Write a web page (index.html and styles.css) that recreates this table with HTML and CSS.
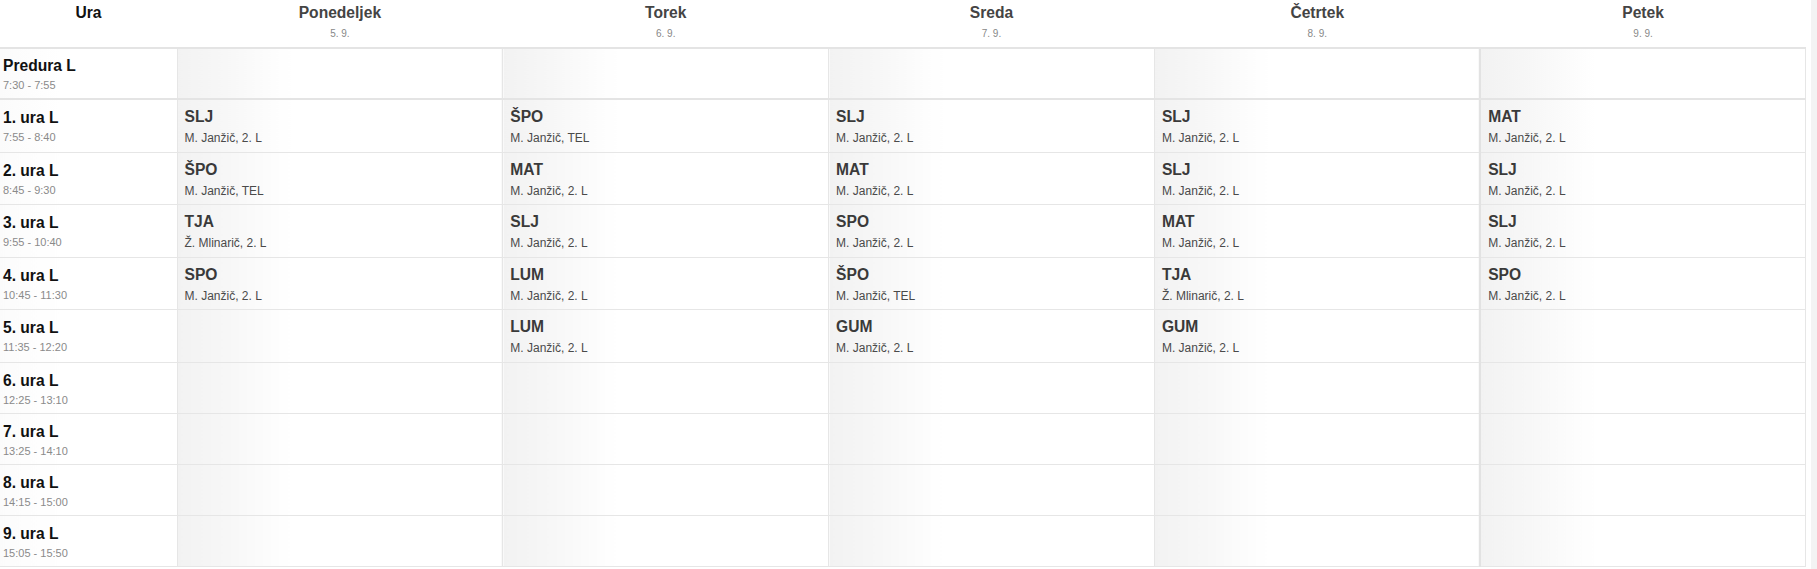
FILE: index.html
```html
<!DOCTYPE html>
<html lang="sl">
<head>
<meta charset="utf-8">
<title>Urnik</title>
<link rel="stylesheet" href="styles.css">
</head>
<body>
<div class="page">
  <table class="timetable">
    <colgroup>
      <col class="col-hour">
      <col class="col-day"><col class="col-day"><col class="col-day"><col class="col-day"><col class="col-day">
    </colgroup>
    <thead>
      <tr>
        <th class="head-hour"><div class="day-name">Ura</div></th>
        <th><div class="day-name">Ponedeljek</div><div class="day-date">5. 9.</div></th>
        <th><div class="day-name">Torek</div><div class="day-date">6. 9.</div></th>
        <th><div class="day-name">Sreda</div><div class="day-date">7. 9.</div></th>
        <th><div class="day-name">Četrtek</div><div class="day-date">8. 9.</div></th>
        <th><div class="day-name">Petek</div><div class="day-date">9. 9.</div></th>
      </tr>
    </thead>
    <tbody>
      <tr class="row-pre">
        <td class="hour"><div class="hour-name">Predura L</div><div class="hour-time">7:30 - 7:55</div></td>
        <td class="slot"></td><td class="slot"></td><td class="slot"></td><td class="slot"></td><td class="slot last"></td>
      </tr>
      <tr class="row-full">
        <td class="hour"><div class="hour-name">1. ura L</div><div class="hour-time">7:55 - 8:40</div></td>
        <td class="slot"><div class="subj">SLJ</div><div class="teach">M. Janžič, 2. L</div></td>
        <td class="slot"><div class="subj">ŠPO</div><div class="teach">M. Janžič, TEL</div></td>
        <td class="slot"><div class="subj">SLJ</div><div class="teach">M. Janžič, 2. L</div></td>
        <td class="slot"><div class="subj">SLJ</div><div class="teach">M. Janžič, 2. L</div></td>
        <td class="slot last"><div class="subj">MAT</div><div class="teach">M. Janžič, 2. L</div></td>
      </tr>
      <tr class="row-full">
        <td class="hour"><div class="hour-name">2. ura L</div><div class="hour-time">8:45 - 9:30</div></td>
        <td class="slot"><div class="subj">ŠPO</div><div class="teach">M. Janžič, TEL</div></td>
        <td class="slot"><div class="subj">MAT</div><div class="teach">M. Janžič, 2. L</div></td>
        <td class="slot"><div class="subj">MAT</div><div class="teach">M. Janžič, 2. L</div></td>
        <td class="slot"><div class="subj">SLJ</div><div class="teach">M. Janžič, 2. L</div></td>
        <td class="slot last"><div class="subj">SLJ</div><div class="teach">M. Janžič, 2. L</div></td>
      </tr>
      <tr class="row-full">
        <td class="hour"><div class="hour-name">3. ura L</div><div class="hour-time">9:55 - 10:40</div></td>
        <td class="slot"><div class="subj">TJA</div><div class="teach">Ž. Mlinarič, 2. L</div></td>
        <td class="slot"><div class="subj">SLJ</div><div class="teach">M. Janžič, 2. L</div></td>
        <td class="slot"><div class="subj">SPO</div><div class="teach">M. Janžič, 2. L</div></td>
        <td class="slot"><div class="subj">MAT</div><div class="teach">M. Janžič, 2. L</div></td>
        <td class="slot last"><div class="subj">SLJ</div><div class="teach">M. Janžič, 2. L</div></td>
      </tr>
      <tr class="row-full">
        <td class="hour"><div class="hour-name">4. ura L</div><div class="hour-time">10:45 - 11:30</div></td>
        <td class="slot"><div class="subj">SPO</div><div class="teach">M. Janžič, 2. L</div></td>
        <td class="slot"><div class="subj">LUM</div><div class="teach">M. Janžič, 2. L</div></td>
        <td class="slot"><div class="subj">ŠPO</div><div class="teach">M. Janžič, TEL</div></td>
        <td class="slot"><div class="subj">TJA</div><div class="teach">Ž. Mlinarič, 2. L</div></td>
        <td class="slot last"><div class="subj">SPO</div><div class="teach">M. Janžič, 2. L</div></td>
      </tr>
      <tr class="row-full">
        <td class="hour"><div class="hour-name">5. ura L</div><div class="hour-time">11:35 - 12:20</div></td>
        <td class="slot"></td>
        <td class="slot"><div class="subj">LUM</div><div class="teach">M. Janžič, 2. L</div></td>
        <td class="slot"><div class="subj">GUM</div><div class="teach">M. Janžič, 2. L</div></td>
        <td class="slot"><div class="subj">GUM</div><div class="teach">M. Janžič, 2. L</div></td>
        <td class="slot last"></td>
      </tr>
      <tr class="row-empty">
        <td class="hour"><div class="hour-name">6. ura L</div><div class="hour-time">12:25 - 13:10</div></td>
        <td class="slot"></td><td class="slot"></td><td class="slot"></td><td class="slot"></td><td class="slot last"></td>
      </tr>
      <tr class="row-empty">
        <td class="hour"><div class="hour-name">7. ura L</div><div class="hour-time">13:25 - 14:10</div></td>
        <td class="slot"></td><td class="slot"></td><td class="slot"></td><td class="slot"></td><td class="slot last"></td>
      </tr>
      <tr class="row-empty">
        <td class="hour"><div class="hour-name">8. ura L</div><div class="hour-time">14:15 - 15:00</div></td>
        <td class="slot"></td><td class="slot"></td><td class="slot"></td><td class="slot"></td><td class="slot last"></td>
      </tr>
      <tr class="row-empty">
        <td class="hour"><div class="hour-name">9. ura L</div><div class="hour-time">15:05 - 15:50</div></td>
        <td class="slot"></td><td class="slot"></td><td class="slot"></td><td class="slot"></td><td class="slot last"></td>
      </tr>
    </tbody>
  </table>
  <div class="scroll-strip"></div>
</div>
</body>
</html>
```

FILE: styles.css
```css
html, body {
  margin: 0;
  padding: 0;
  background: #fff;
}

body {
  font-family: "Liberation Sans", Arial, sans-serif;
  color: #333;
}

.page {
  display: flex;
  align-items: flex-start;
  width: 1817px;
  height: 569px;
  overflow: hidden;
}

.scroll-strip {
  flex: 0 0 6px;
  margin-left: 5px;
  height: 569px;
  background: #f3f3f3;
}

.timetable {
  flex: 0 0 1806px;
  width: 1806px;
  border-collapse: collapse;
  table-layout: fixed;
}

.col-hour { width: 177px; }
.col-day { width: 325.8px; }

.timetable th {
  padding: 4px 0 0;
  height: 43px;
  vertical-align: top;
  text-align: center;
  font-weight: normal;
  border-bottom: 2px solid #e4e4e4;
}

.day-name {
  font-size: 15.6px;
  line-height: 18px;
  font-weight: bold;
  color: #444;
}

.head-hour .day-name {
  color: #111;
}

.day-date {
  margin-top: 5px;
  font-size: 10px;
  line-height: 14px;
  color: #888;
}

.timetable td {
  vertical-align: top;
  border-bottom: 1px solid #e6e6e6;
  border-right: 1px solid #e6e6e6;
}

.row-pre td {
  height: 41px;
  border-bottom: 2px solid #e4e4e4;
}

.row-full td { height: 42.5px; }
.row-empty td { height: 41px; }

.hour {
  padding: 9px 3px 0;
  background: linear-gradient(to right, #fbfbfb, #fff 60px);
}

.row-pre .hour { padding-top: 8px; }
.row-pre .slot { padding-top: 8px; }
.row-full .slot { padding-top: 10px; height: 41.5px; }
.row-empty .slot { padding-top: 9px; }

.hour-name {
  font-size: 15.6px;
  line-height: 18px;
  font-weight: bold;
  color: #111;
}

.hour-time {
  margin-top: 3px;
  font-size: 11px;
  line-height: 14px;
  color: #8a8a8a;
}

.slot {
  padding: 7px 7px 0;
  background: linear-gradient(to right, #f2f2f2, #f7f7f7 50px, #fff 115px);
}

.slot.last {
  border-left: 2px solid #e2e2e2;
}

.subj {
  margin-top: -2px;
  font-size: 15.6px;
  line-height: 18px;
  font-weight: bold;
  color: #3a3a3a;
}

.teach {
  margin-top: 4px;
  font-size: 12px;
  line-height: 16px;
  color: #4a4a4a;
}
```
